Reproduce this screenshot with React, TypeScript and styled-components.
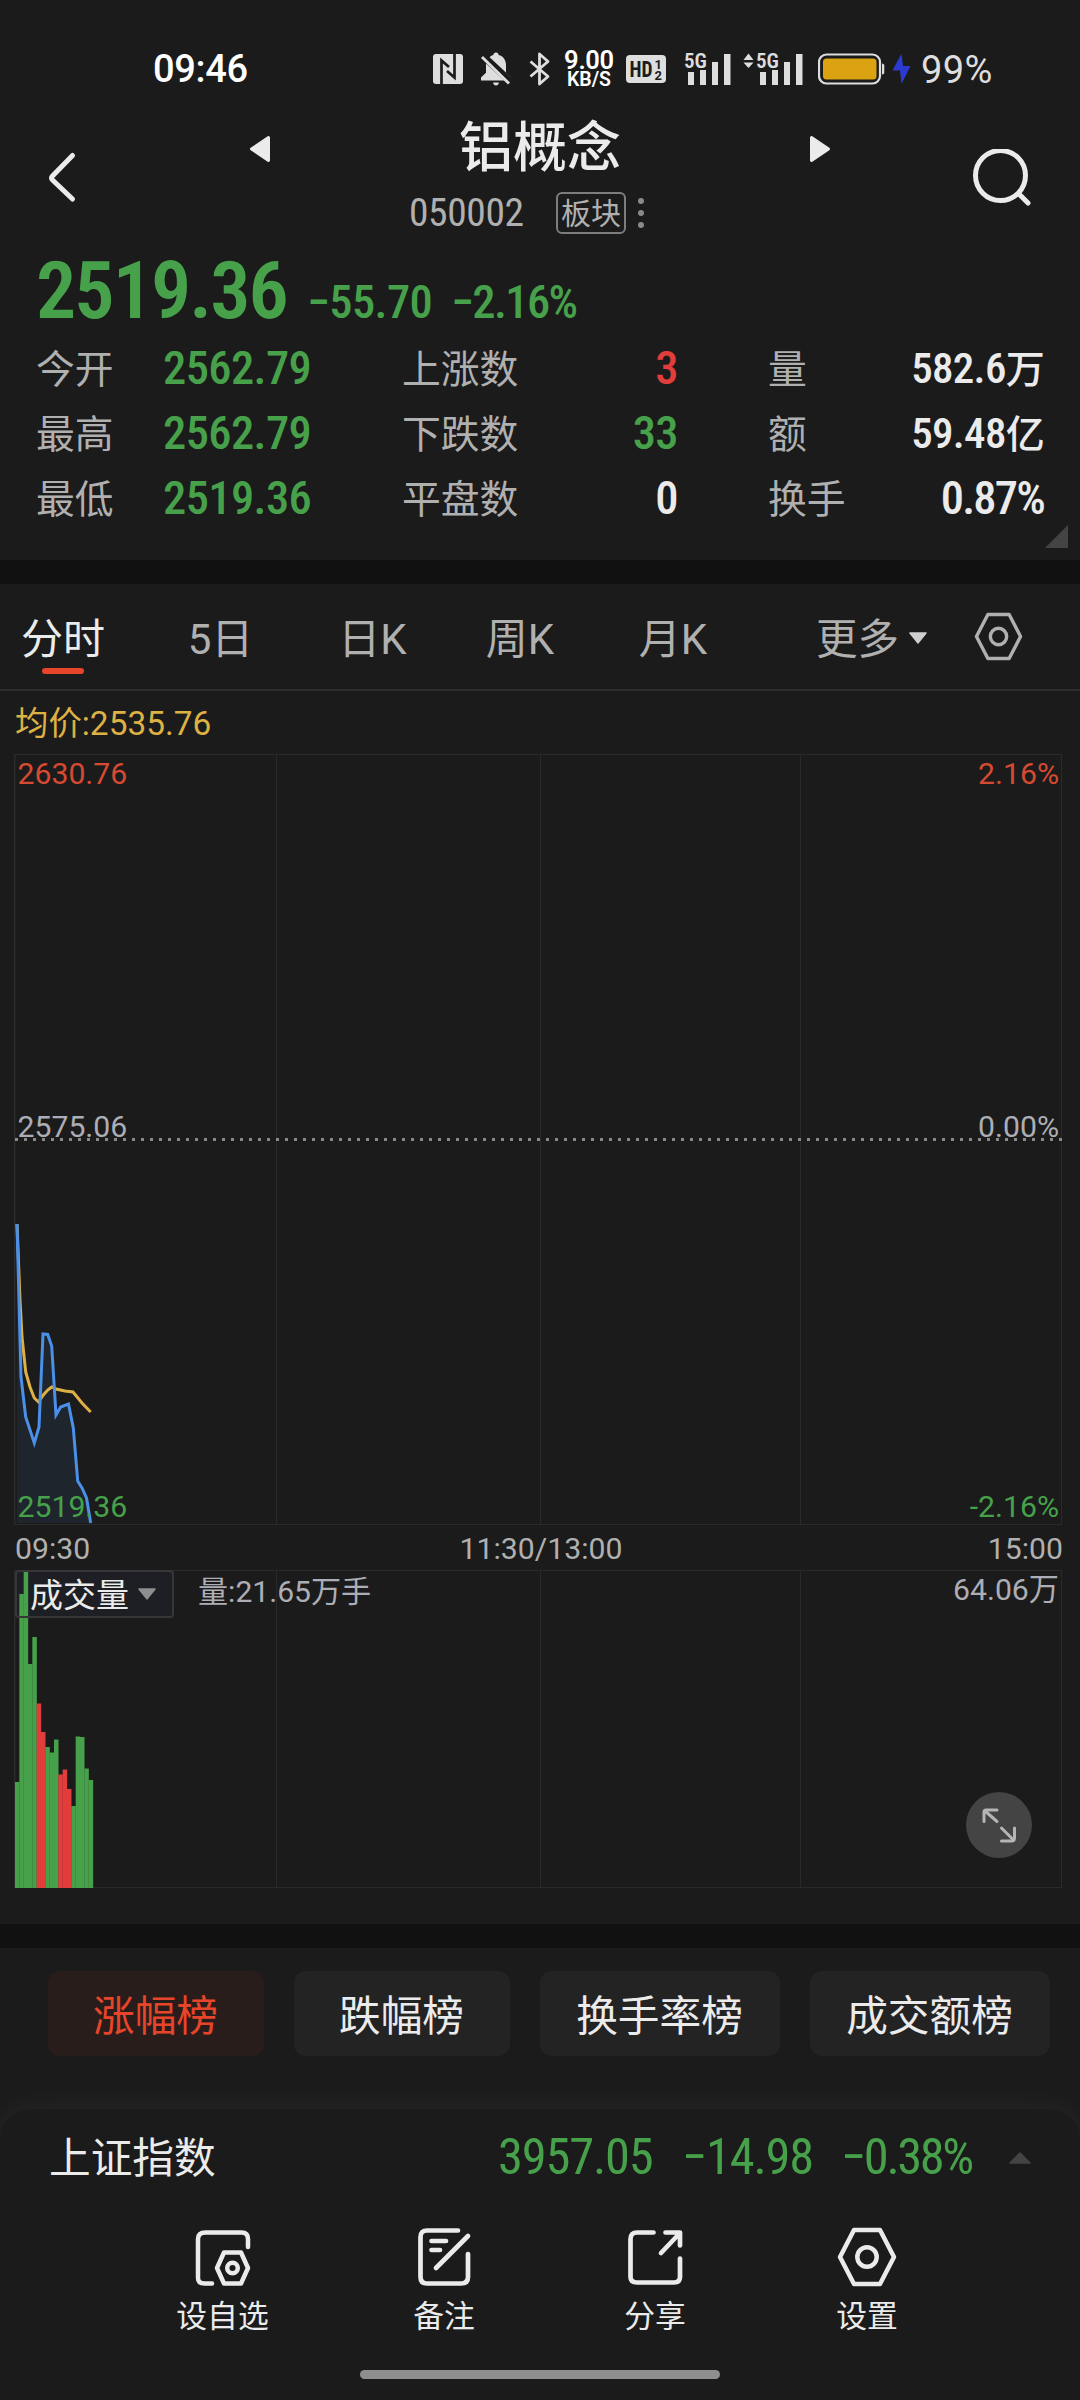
import React from 'react';
import styled, { createGlobalStyle } from 'styled-components';

const c = {
  bg: '#1b1b1b',
  gutter: '#111111',
  text: '#ebebeb',
  muted: '#b0b0b0',
  grid: '#2a2a2a',
  green: '#47a14b',
  red: '#e13d3b',
  accent: '#e64529',
  yellow: '#deb144',
  blue: '#4a90e8',
};

const sans = `Roboto, "Noto Sans CJK SC", sans-serif`;
const din = `"Roboto Condensed", Roboto, "Noto Sans CJK SC", sans-serif`;

const GlobalStyle = createGlobalStyle`
  * { box-sizing: border-box; }
  body { margin: 0; background: ${c.bg}; color: ${c.text}; font-family: ${sans}; }
  svg { display: block; flex: none; }
`;

const Screen = styled.div`
  width: 1080px;
  height: 2400px;
  display: flex;
  flex-direction: column;
  overflow: hidden;
  background: ${c.bg};
  white-space: nowrap;
`;

const StatusBar = styled.div`
  height: 110px;
  padding: 28px 0 0 153px;
  display: flex;
  align-items: center;
  color: #dedede;
`;
const Clock = styled.div`
  width: 280px;
  font: 500 38px/50px ${sans};
  letter-spacing: -0.3px;
  color: #fff;
`;
const StatusItem = styled.div<{ $gap?: number }>`
  margin-left: ${(p) => p.$gap ?? 0}px;
`;
const NetSpeed = styled.div`
  width: 50px;
  margin-left: 13px;
  padding-top: 1px;
  display: flex;
  flex-direction: column;
  align-items: center;
  color: #fff;
  font-family: ${sans};
`;
const SpeedValue = styled.span`
  font-size: 25.5px;
  font-weight: 600;
  line-height: 20px;
  letter-spacing: -0.3px;
`;
const SpeedUnit = styled.span`
  font-size: 19.5px;
  font-weight: 600;
  line-height: 19px;
`;
const BatteryText = styled.div`
  margin-left: 10px;
  padding-top: 2px;
  font: 400 38px/50px ${sans};
  letter-spacing: 0.4px;
`;

const Header = styled.div`
  height: 126px;
  padding: 0 46px;
  display: flex;
  justify-content: space-between;
`;
const HeaderIcon = styled.div`
  padding-top: 39px;
  width: 61px;
`;
const HeaderCenter = styled.div`
  width: 582px;
  display: flex;
  flex-direction: column;
`;
const TitleRow = styled.div`
  height: 78px;
  display: flex;
  align-items: center;
  justify-content: space-between;
`;
const Title = styled.div`
  font: 500 54px/78px ${sans};
`;
const CodeRow = styled.div`
  height: 48px;
  display: flex;
  align-items: center;
  padding: 2px 0 0 160px;
`;
const Code = styled.div`
  width: 147px;
  font: 400 39.5px/48px ${din};
  letter-spacing: -0.4px;
  color: ${c.muted};
`;
const Badge = styled.div`
  width: 70px;
  height: 42px;
  border: 2px solid #7d7d7d;
  border-radius: 6px;
  text-align: center;
  font: 400 30px/39px ${sans};
  color: ${c.muted};
`;
const Dots = styled.div`
  margin-left: 12px;
  display: flex;
  flex-direction: column;
  gap: 6px;
`;
const Dot = styled.i`
  width: 6px;
  height: 6px;
  border-radius: 50%;
  background: #8a8a8a;
`;

const Quote = styled.div`
  position: relative;
  height: 324px;
  color: ${c.green};
`;
const PriceRow = styled.div`
  height: 100px;
  padding: 9px 0 0 36px;
  display: flex;
  align-items: baseline;
  font-family: ${din};
`;
const Price = styled.div`
  width: 271px;
  font-size: 80px;
  font-weight: 600;
  line-height: 92px;
  letter-spacing: -1.9px;
`;
const Change = styled.div<{ $w: number; $track: number }>`
  width: ${(p) => p.$w}px;
  font-size: 46.5px;
  font-weight: 500;
  letter-spacing: ${(p) => p.$track}px;
`;
const Stats = styled.div`
  padding: 1px 0 0 36px;
  display: grid;
  grid-template-columns: 127px 239px 150px 216px 100px 176px;
  grid-auto-rows: 65px;
`;
const StatLabel = styled.div`
  font: 400 38.8px/66px ${sans};
  color: ${c.muted};
`;
const StatValue = styled.div<{ $tone?: string; $align?: string; $inset?: number; $track?: number }>`
  font: 500 46.5px/62px ${din};
  letter-spacing: ${(p) => p.$track ?? -0.6}px;
  color: ${(p) => p.$tone ?? c.text};
  text-align: ${(p) => p.$align ?? 'right'};
  padding-right: ${(p) => p.$inset ?? 0}px;
`;
const StatAmount = styled(StatValue)`
  font-size: 43px;
`;
const Unit = styled.span`
  font-size: 39px;
  font-weight: 500;
`;
const Corner = styled.i`
  position: absolute;
  left: 1045px;
  bottom: 12px;
  width: 23px;
  height: 23px;
  background: #444;
  clip-path: polygon(100% 0, 100% 100%, 0 100%);
`;
const Gutter = styled.div`
  height: 24px;
  background: ${c.gutter};
  flex: none;
`;

const Tabs = styled.div`
  height: 107px;
  border-bottom: 2px solid #2d2d2d;
  display: flex;
`;
const Tab = styled.div<{ $w: number; $active?: boolean }>`
  width: ${(p) => p.$w}px;
  display: flex;
  flex-direction: column;
  align-items: center;
  font: 400 42px/84px ${sans};
  padding-top: 14px;
  color: ${(p) => (p.$active ? c.text : c.muted)};
`;
const TabMark = styled.i`
  width: 42px;
  height: 6px;
  margin-top: -14px;
  border-radius: 3px;
  background: ${c.accent};
`;
const MoreTab = styled.div`
  width: 238px;
  padding: 14px 0 0 80px;
  display: flex;
  align-items: center;
  gap: 10px;
  height: 98px;
  font: 400 41.5px/84px ${sans};
  color: ${c.muted};
`;
const CaretSlot = styled.span`
  padding-bottom: 5px;
`;
const TabGear = styled.div`
  padding-top: 28px;
`;

const Average = styled.div`
  height: 63px;
  padding-left: 15px;
  font: 400 33.4px/65px ${sans};
  color: ${c.yellow};
`;
const ChartPanel = styled.div`
  position: relative;
`;
const AxisLabel = styled.span<{ $top: number; $tone: string; $side: 'left' | 'right' }>`
  position: absolute;
  top: ${(p) => p.$top}px;
  ${(p) => (p.$side === 'left' ? 'left: 17.5px;' : 'right: 21px;')}
  font: 400 30.2px/30px ${sans};
  color: ${(p) => p.$tone};
`;
const TimeAxis = styled.div`
  height: 45px;
  padding: 0 17px 0 15px;
  display: grid;
  grid-template-columns: 1fr auto 1fr;
  font: 400 30.2px/48px ${sans};
  color: ${c.muted};
`;
const TimeTick = styled.span<{ $end?: boolean }>`
  text-align: ${(p) => (p.$end ? 'right' : 'left')};
  &:nth-child(2) {
    margin: 0 -2px 0 2px;
  }
`;
const VolumePanel = styled(ChartPanel)`
  height: 354px;
`;
const IndicatorSelect = styled.div`
  position: absolute;
  left: 15px;
  top: 0;
  width: 159px;
  height: 48px;
  padding-left: 13px;
  display: flex;
  align-items: center;
  gap: 9px;
  border: 2px solid #37373a;
  border-radius: 4px;
  font: 400 33px/44px ${sans};
  color: ${c.text};
`;
const IndicatorName = styled.span`
  padding-top: 4px;
`;
const VolumeText = styled.span`
  position: absolute;
  left: 198px;
  top: 6px;
  font: 400 30.1px/32px ${sans};
  color: #adaeb5;
`;
const ExpandButton = styled.div`
  position: absolute;
  left: 966px;
  top: 222px;
  width: 66px;
  height: 66px;
  border-radius: 50%;
  background: #444;
`;

const Ranks = styled.div`
  height: 161px;
  padding: 23px 30px 0 48px;
  display: flex;
  gap: 30px;
`;
const Rank = styled.div<{ $w: number; $active?: boolean }>`
  width: ${(p) => p.$w}px;
  height: 85px;
  padding-right: 1px;
  border-radius: 12px;
  text-align: center;
  font: 400 41.7px/91px ${sans};
  background: ${(p) => (p.$active ? '#291d1b' : '#232323')};
  color: ${(p) => (p.$active ? c.accent : c.text)};
`;

const Sheet = styled.div`
  flex: 1;
  border-radius: 30px 30px 0 0;
  background: ${c.bg};
  box-shadow: 0 0 30px rgba(255, 255, 255, 0.06);
`;
const IndexRow = styled.div`
  height: 100px;
  padding-left: 49px;
  display: flex;
  align-items: center;
`;
const IndexName = styled.div`
  width: 449px;
  font: 400 41.7px/102px ${sans};
`;
const IndexValue = styled.div<{ $w: number; $track: number }>`
  width: ${(p) => p.$w}px;
  height: 100px;
  font: 400 50.5px/96px ${din};
  letter-spacing: ${(p) => p.$track}px;
  color: ${c.green};
`;
const CaretUp = styled.span`
  margin: -3px 0 0 -1px;
`;
const Actions = styled.div`
  padding: 18px 0 0 117px;
  display: flex;
`;
const Action = styled.div<{ $w: number }>`
  flex: none;
  width: ${(p) => p.$w}px;
  display: flex;
  flex-direction: column;
  align-items: center;
  font: 400 30.8px/38px ${sans};
  gap: 11px;
`;
const HomeBar = styled.div`
  width: 360px;
  height: 9px;
  margin: 34px auto 0;
  border-radius: 5px;
  background: #8e8e8e;
`;

const Nfc = () => (
  <svg width="30" height="30" viewBox="0 0 30 30">
    <rect width="30" height="30" rx="3" fill="#dedede" />
    <path d="M8.500 30V6.500L16 13M21.500 0V23.500L14 17" fill="none" stroke={c.bg} strokeWidth="2.700" />
  </svg>
);
const BellOff = () => (
  <svg width="30" height="34" viewBox="0 0 30 34">
    <path
      d="M15 0.500c1.600 0 2.600 1 2.600 2.400 4.600 1.200 7.400 5 7.400 9.800v8l5 4.800v3H0v-3l5-4.800v-8C5 8 7.800 4.100 12.400 2.900 12.400 1.500 13.400 0.500 15 0.500z"
      fill="#dedede"
    />
    <path d="M12 30.500h6c-0.400 2-1.500 3-3 3s-2.600-1-3-3z" fill="#dedede" />
    <path d="M0 2L30 30" stroke={c.bg} strokeWidth="7" />
    <path d="M1 5l27 26.500" stroke="#dedede" strokeWidth="2.800" />
  </svg>
);
const Bluetooth = () => (
  <svg width="22" height="34" viewBox="0 0 22 34">
    <path d="M1.500 9.500L19 24.500 10.500 32V2L19 9.500 1.500 24.500" fill="none" stroke="#dedede" strokeWidth="2.800" strokeLinejoin="round" />
  </svg>
);
const Hd = () => (
  <svg width="40" height="28" viewBox="0 0 40 28">
    <rect width="40" height="28" rx="4" fill="#dedede" />
    <text x="3.500" y="22" fontFamily="Roboto Condensed" fontSize="22" fontWeight="700" fill={c.bg} textLength="23" lengthAdjust="spacingAndGlyphs">HD</text>
    <text x="28.500" y="13.500" fontFamily="Roboto" fontSize="13" fontWeight="700" fill={c.bg}>1</text>
    <text x="28.500" y="24.500" fontFamily="Roboto" fontSize="13" fontWeight="700" fill={c.bg}>2</text>
  </svg>
);
const Signal = ({ data }: { data?: boolean }) => (
  <svg width={data ? 60 : 47} height="38" viewBox={data ? '-13 -2 60 38' : '0 -2 47 38'}>
    {data && <path d="M-12.500 8L-7.500 1.500-2.500 8zM-12.500 10.500L-7.500 16l5-5.500z" fill="#dedede" />}
    <text x="0" y="15.500" fontFamily="Roboto Condensed" fontSize="20.500" fontWeight="600" fill="#dedede" textLength="23" lengthAdjust="spacingAndGlyphs">5G</text>
    <path d="M4 20h6v13H4zM16 18h6v15h-6zM28 10h6v23h-6zM40 2h6.500v31H40z" fill="#dedede" />
  </svg>
);
const Battery = () => (
  <svg width="68" height="32" viewBox="0 0 68 32">
    <rect x="1" y="1.500" width="61" height="29" rx="7.500" fill="none" stroke="#dedede" strokeWidth="2.200" />
    <rect x="5" y="5.500" width="53.500" height="21" rx="3.500" fill="#dba212" />
    <path d="M64 10.500c1.500 0 2.300 1 2.300 2v7c0 1-.8 2-2.300 2z" fill="#dedede" />
  </svg>
);
const Bolt = () => (
  <svg width="19" height="32" viewBox="0 0 19 32">
    <path d="M9.500 0.500L0.500 17.500h7.500l1.500 13.500L18.500 13H11z" fill="#2b3bd0" />
  </svg>
);
const Back = () => (
  <svg width="34" height="54" viewBox="0 0 34 54">
    <path d="M26.500 7.500L6.500 28q-2 2 0 4l20 19" transform="translate(0 -1)" fill="none" stroke={c.text} strokeWidth="5" strokeLinecap="round" />
  </svg>
);
const Search = () => (
  <svg width="60" height="62" viewBox="0 0 60 62">
    <circle cx="27.500" cy="26.500" r="25" fill="none" stroke={c.text} strokeWidth="5" />
    <path d="M46 45l9 9" stroke={c.text} strokeWidth="5" strokeLinecap="round" />
  </svg>
);
const Arrow = ({ flip }: { flip?: boolean }) => (
  <svg width="22" height="28" viewBox="0 0 22 28">
    <path
      d={flip ? 'M2.500 2.500L19.500 14 2.500 25.500z' : 'M19.500 2.500L2.500 14l17 11.500z'}
      fill={c.text}
      stroke={c.text}
      strokeWidth="3"
      strokeLinejoin="round"
    />
  </svg>
);
const Caret = ({ w, h, fill, up }: { w: number; h: number; fill: string; up?: boolean }) => (
  <svg width={w} height={h} viewBox="0 0 20 12" preserveAspectRatio="none">
    <path d={up ? 'M1 11h18L10 1z' : 'M1 1h18l-9 10z'} fill={fill} stroke={fill} strokeWidth="1.500" strokeLinejoin="round" />
  </svg>
);
const HexGear = ({ size, color, stroke, r }: { size: number; color: string; stroke: number; r: number }) => (
  <svg width={size} height={size} viewBox="0 0 60 60">
    <path d="M17 3h26L57 30 43 57H17L3 30z" fill="none" stroke={color} strokeWidth={stroke} strokeLinejoin="round" />
    <circle cx="30" cy="30" r={r} fill="none" stroke={color} strokeWidth={stroke} />
  </svg>
);
const WatchIcon = () => (
  <svg width="60" height="60" viewBox="0 0 60 60">
    <g fill="none" stroke={c.text} strokeWidth="4.500" strokeLinecap="round" strokeLinejoin="round">
      <path d="M55 20v-8q0-6.500-6.500-6.500h-36Q5 5.500 5 12v39q0 5.500 6.500 5.500H19" />
      <path d="M31 25.500h17L55 41l-7 15.500H31L24 41z" />
      <circle cx="39.500" cy="41" r="5.300" />
    </g>
  </svg>
);
const NoteIcon = () => (
  <svg width="60" height="60" viewBox="0 0 60 60">
    <g fill="none" stroke={c.text} strokeWidth="4.700" strokeLinecap="round" strokeLinejoin="round">
      <path d="M44 3.500H13Q6.500 3.500 6.500 10v40q0 6.500 6.500 6.500h34q7 0 7-6.500V27" />
      <path d="M22 41L54 9M17.500 14H32M17.500 23h8.500" />
    </g>
  </svg>
);
const ShareIcon = () => (
  <svg width="60" height="60" viewBox="0 0 60 60">
    <g fill="none" stroke={c.text} strokeWidth="4.700" strokeLinecap="round" strokeLinejoin="round">
      <path d="M28.500 5.500H12Q5.500 5.500 5.500 12v38q0 5.500 6.500 5.500h37q6 0 6-5.500V31.500" />
      <path d="M36 26L54.500 6.500M40.500 5.500h14.500v13" />
    </g>
  </svg>
);

const priceLine: [number, number][] = [
  [17, 1224], [21, 1377], [25.7, 1417], [34.3, 1443], [39, 1427], [43, 1334], [47.7, 1334.5], [51.7, 1346],
  [56, 1415], [60.7, 1407], [68.5, 1404], [73.3, 1428], [77.7, 1481], [82, 1488], [86.5, 1498], [90.7, 1523],
];
const averageLine: [number, number][] = [
  [17, 1224], [20, 1300], [22, 1337], [25.7, 1372], [30, 1387], [34.3, 1398], [38.5, 1402], [43.3, 1395],
  [47.7, 1390], [51.7, 1387], [56, 1389], [65, 1391], [73, 1392], [82, 1403], [90.7, 1412],
];
const toPoints = (line: [number, number][]) => line.map((p) => p.join(',')).join(' ');

const volumes: [number, boolean][] = [
  [1782, true], [1594, true], [1572, true], [1664, true], [1637, true], [1703.5, false], [1732, false],
  [1747, true], [1752.5, true], [1739.5, true], [1774.5, false], [1769.5, false], [1789, false],
  [1806, true], [1736.5, true], [1737, true], [1768.5, true], [1780, true],
];

const GridLines = ({ top, bottom }: { top: number; bottom: number }) => (
  <g fill={c.grid}>
    <rect x="14" y={top} width="1048" height="1" />
    <rect x="14" y={bottom - 1} width="1048" height="1" />
    <rect x="14" y={top} width="1.500" height={bottom - top} />
    {[276, 540, 800, 1061].map((x) => (
      <rect key={x} x={x} y={top} width="1" height={bottom - top} />
    ))}
  </g>
);

const stats = [
  ['今开', '2562.79', c.green, '上涨数', '3', c.red, '量', '582.6', '万'],
  ['最高', '2562.79', c.green, '下跌数', '33', c.green, '额', '59.48', '亿'],
  ['最低', '2519.36', c.green, '平盘数', '0', c.text, '换手', '0.87%', ''],
];

export default function App() {
  return (
    <Screen>
      <GlobalStyle />
      <StatusBar>
        <Clock>09:46</Clock>
        <StatusItem><Nfc /></StatusItem>
        <StatusItem $gap={18}><BellOff /></StatusItem>
        <StatusItem $gap={18}><Bluetooth /></StatusItem>
        <NetSpeed>
          <SpeedValue>9.00</SpeedValue>
          <SpeedUnit>KB/S</SpeedUnit>
        </NetSpeed>
        <StatusItem $gap={12}><Hd /></StatusItem>
        <StatusItem $gap={18}><Signal /></StatusItem>
        <StatusItem $gap={12}><Signal data /></StatusItem>
        <StatusItem $gap={15}><Battery /></StatusItem>
        <StatusItem $gap={6}><Bolt /></StatusItem>
        <BatteryText>99%</BatteryText>
      </StatusBar>

      <Header>
        <HeaderIcon><Back /></HeaderIcon>
        <HeaderCenter>
          <TitleRow>
            <Arrow />
            <Title>铝概念</Title>
            <Arrow flip />
          </TitleRow>
          <CodeRow>
            <Code>050002</Code>
            <Badge>板块</Badge>
            <Dots><Dot /><Dot /><Dot /></Dots>
          </CodeRow>
        </HeaderCenter>
        <HeaderIcon><Search /></HeaderIcon>
      </Header>

      <Quote>
        <PriceRow>
          <Price>2519.36</Price>
          <Change $w={144} $track={-0.6}>−55.70</Change>
          <Change $w={130} $track={-1.6}>−2.16%</Change>
        </PriceRow>
        <Stats>
          {stats.map(([l1, v1, t1, l2, v2, t2, l3, v3, unit]) => (
            <React.Fragment key={l1}>
              <StatLabel>{l1}</StatLabel>
              <StatValue $tone={t1} $align="left">{v1}</StatValue>
              <StatLabel>{l2}</StatLabel>
              <StatValue $tone={t2} $inset={90}>{v2}</StatValue>
              <StatLabel>{l3}</StatLabel>
              {unit ? <StatAmount $track={-0.7}>{v3}<Unit>{unit}</Unit></StatAmount> : <StatValue $track={-1.8}>{v3}</StatValue>}
            </React.Fragment>
          ))}
        </Stats>
        <Corner />
      </Quote>
      <Gutter />

      <Tabs>
        <Tab $w={126} $active>分时<TabMark /></Tab>
        <Tab $w={189}>5日</Tab>
        <Tab $w={115}>日K</Tab>
        <Tab $w={180}>周K</Tab>
        <Tab $w={126}>月K</Tab>
        <MoreTab>更多<CaretSlot><Caret w={18} h={12} fill="#cfcfcf" /></CaretSlot></MoreTab>
        <TabGear><HexGear size={49} color={c.muted} stroke={4.2} r={10} /></TabGear>
      </Tabs>

      <Average>均价:2535.76</Average>
      <ChartPanel>
        <svg width="1080" height="771" viewBox="0 754 1080 771">
          <GridLines top={754} bottom={1525} />
          <path d="M15 1139.500H1062" stroke="#8a8a8a" strokeWidth="3" strokeDasharray="3 6" />
          <polygon points={`17,1523 ${toPoints(priceLine)}`} fill="#1e252c" />
          <polyline points={toPoints(averageLine)} fill="none" stroke={c.yellow} strokeWidth="3" />
          <polyline points={toPoints(priceLine)} fill="none" stroke={c.blue} strokeWidth="3" />
        </svg>
        <AxisLabel $side="left" $top={5} $tone="#d64a32">2630.76</AxisLabel>
        <AxisLabel $side="right" $top={5} $tone="#d64a32">2.16%</AxisLabel>
        <AxisLabel $side="left" $top={358} $tone="#adaeb5">2575.06</AxisLabel>
        <AxisLabel $side="right" $top={358} $tone="#adaeb5">0.00%</AxisLabel>
        <AxisLabel $side="left" $top={738} $tone={c.green}>2519.36</AxisLabel>
        <AxisLabel $side="right" $top={738} $tone={c.green}>-2.16%</AxisLabel>
      </ChartPanel>
      <TimeAxis>
        <TimeTick>09:30</TimeTick>
        <TimeTick>11:30/13:00</TimeTick>
        <TimeTick $end>15:00</TimeTick>
      </TimeAxis>
      <VolumePanel>
        <svg width="1080" height="318" viewBox="0 1570 1080 318">
          <GridLines top={1570} bottom={1888} />
          <rect x="16" y="1571" width="157" height="46" fill="#1e1f24" />
          {volumes.map(([top, down], i) => (
            <rect key={i} x={15 + i * 4.333} y={top} width="4.500" height={1888 - top} fill={down ? c.green : c.red} />
          ))}
        </svg>
        <IndicatorSelect><IndicatorName>成交量</IndicatorName><Caret w={18} h={12} fill="#8e8e8e" /></IndicatorSelect>
        <VolumeText>量:21.65万手</VolumeText>
        <AxisLabel $side="right" $top={5} $tone="#adaeb5">64.06万</AxisLabel>
        <ExpandButton>
          <svg width="66" height="66" viewBox="966 1792 66 66">
            <path
              d="M997 1810h-11q-2 0-2 2v9.500M985 1811l12 10.500M1001.500 1841h10q3 0 3-3v-10M1013.500 1840l-12-12"
              fill="none"
              stroke="#b5b5b5"
              strokeWidth="3"
              strokeLinecap="round"
            />
          </svg>
        </ExpandButton>
      </VolumePanel>
      <Gutter />

      <Ranks>
        <Rank $w={216} $active>涨幅榜</Rank>
        <Rank $w={216}>跌幅榜</Rank>
        <Rank $w={240}>换手率榜</Rank>
        <Rank $w={240}>成交额榜</Rank>
      </Ranks>

      <Sheet>
        <IndexRow>
          <IndexName>上证指数</IndexName>
          <IndexValue $w={184} $track={-1.2}>3957.05</IndexValue>
          <IndexValue $w={159} $track={-1.2}>−14.98</IndexValue>
          <IndexValue $w={169} $track={-2.4}>−0.38%</IndexValue>
          <CaretUp><Caret w={22} h={12} fill="#444" up /></CaretUp>
        </IndexRow>
        <Actions>
          <Action $w={211}><WatchIcon />设自选</Action>
          <Action $w={232}><NoteIcon />备注</Action>
          <Action $w={190}><ShareIcon />分享</Action>
          <Action $w={234}><HexGear size={60} color={c.text} stroke={4.5} r={9.7} />设置</Action>
        </Actions>
        <HomeBar />
      </Sheet>
    </Screen>
  );
}
